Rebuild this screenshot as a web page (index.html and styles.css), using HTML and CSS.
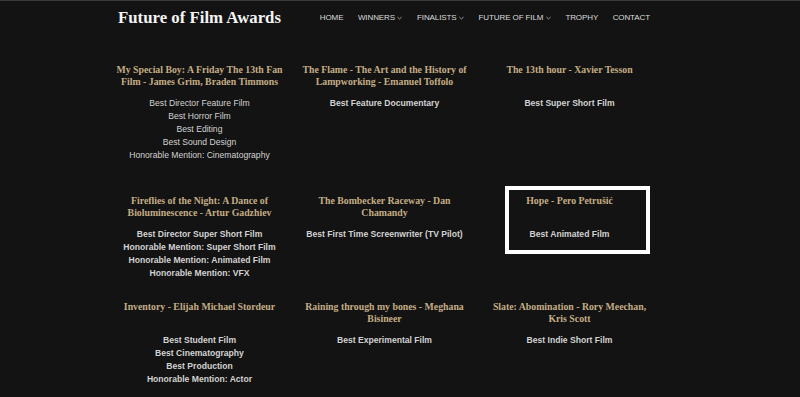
FILE: index.html
```html
<!DOCTYPE html>
<html lang="en">
<head>
  <meta charset="UTF-8" />
  <meta name="viewport" content="width=device-width, initial-scale=1.0"/>
  <title>Future of Film Awards - Winners</title>
  <link rel="stylesheet" href="styles.css">
</head>
<body>
  <div class="wrap">
    <header class="header">
      <div class="logo">Future of Film Awards</div>
      <nav class="nav">
        <a href="#">HOME</a>
        <a href="#" class="drop">WINNERS <svg viewBox="0 0 6 4"><polyline points="0.5,0.8 3,3.2 5.5,0.8"/></svg></a>
        <a href="#" class="drop">FINALISTS <svg viewBox="0 0 6 4"><polyline points="0.5,0.8 3,3.2 5.5,0.8"/></svg></a>
        <a href="#" class="drop">FUTURE OF FILM <svg viewBox="0 0 6 4"><polyline points="0.5,0.8 3,3.2 5.5,0.8"/></svg></a>
        <a href="#">TROPHY</a>
        <a href="#">CONTACT</a>
      </nav>
    </header>

    <main class="grid">
      <div class="card card-tall">
        <h3>My Special Boy: A Friday The 13th Fan Film - James Grim, Braden Timmons</h3>
        <ul class="awards light">
          <li>Best Director Feature Film</li>
          <li>Best Horror Film</li>
          <li>Best Editing</li>
          <li>Best Sound Design</li>
          <li>Honorable Mention: Cinematography</li>
        </ul>
      </div>
      <div class="card">
        <h3>The Flame - The Art and the History of Lampworking - Emanuel Toffolo</h3>
        <ul class="awards">
          <li>Best Feature Documentary</li>
        </ul>
      </div>
      <div class="card">
        <h3>The 13th hour - Xavier Tesson</h3>
        <ul class="awards">
          <li>Best Super Short Film</li>
        </ul>
      </div>

      <div class="card">
        <h3>Fireflies of the Night: A Dance of Bioluminescence - Artur Gadzhiev</h3>
        <ul class="awards">
          <li>Best Director Super Short Film</li>
          <li>Honorable Mention: Super Short Film</li>
          <li>Honorable Mention: Animated Film</li>
          <li>Honorable Mention: VFX</li>
        </ul>
      </div>
      <div class="card">
        <h3>The Bombecker Raceway - Dan Chamandy</h3>
        <ul class="awards">
          <li>Best First Time Screenwriter (TV Pilot)</li>
        </ul>
      </div>
      <div class="card card-active">
        <h3>Hope - Pero Petrušić</h3>
        <ul class="awards">
          <li>Best Animated Film</li>
        </ul>
      </div>

      <div class="card">
        <h3>Inventory - Elijah Michael Stordeur</h3>
        <ul class="awards">
          <li>Best Student Film</li>
          <li>Best Cinematography</li>
          <li>Best Production</li>
          <li>Honorable Mention: Actor</li>
        </ul>
      </div>
      <div class="card">
        <h3>Raining through my bones - Meghana Bisineer</h3>
        <ul class="awards">
          <li>Best Experimental Film</li>
        </ul>
      </div>
      <div class="card">
        <h3>Slate: Abomination - Rory Meechan, Kris Scott</h3>
        <ul class="awards">
          <li>Best Indie Short Film</li>
        </ul>
      </div>
    </main>
  </div>
</body>
</html>
```

FILE: styles.css
```css
body {
  margin: 0;
  background: #131313;
  border-top: 1px solid #3a3a3a;
  font-family: 'Liberation Sans', Arial, sans-serif;
  color: #d2d2d2;
  height: 396px;
  overflow: hidden;
}

.wrap {
  width: 555px;
  margin-left: 107px;
}

.header {
  display: flex;
  align-items: center;
  justify-content: space-between;
  height: 33px;
  padding: 0 12px 0 11px;
}

.logo {
  font-family: 'Liberation Serif', 'Times New Roman', serif;
  font-weight: bold;
  font-size: 16.8px;
  color: #f4f4f4;
}

.nav {
  display: flex;
  align-items: center;
  gap: 14.5px;
}

.nav a {
  display: flex;
  align-items: center;
  gap: 2.5px;
  color: #dcdcdc;
  text-decoration: none;
  font-size: 8px;
  letter-spacing: -0.1px;
}

.nav svg {
  width: 5px;
  height: 4px;
  fill: none;
  stroke: #c8c8c8;
  stroke-width: 0.9;
}

.grid {
  display: grid;
  grid-template-columns: repeat(3, 1fr);
  row-gap: 21px;
  margin-top: 30px;
}

.card {
  position: relative;
  padding: 0 7px;
  text-align: center;
}

.card h3 {
  margin: 0;
  min-height: 24px;
  font-family: 'Liberation Serif', 'Times New Roman', serif;
  font-weight: bold;
  font-size: 9.8px;
  line-height: 12px;
  color: #c4ad85;
}

.awards {
  list-style: none;
  margin: 9px 0 0;
  padding: 0;
  font-size: 8.6px;
  line-height: 13px;
  font-weight: bold;
}

.awards.light {
  font-weight: normal;
}

.card-tall .awards {
  padding-bottom: 12px;
}

.card-active::after {
  content: "";
  position: absolute;
  top: -9px;
  left: 28px;
  right: 12px;
  height: 68px;
  box-sizing: border-box;
  border: 4px solid #fff;
}
```
